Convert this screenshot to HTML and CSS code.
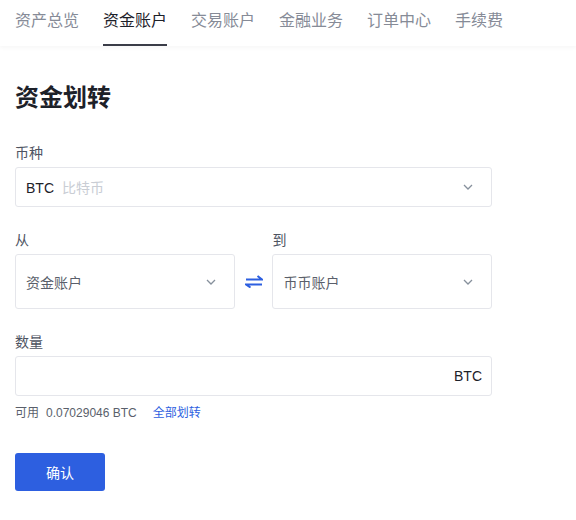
FILE: index.html
```html
<!DOCTYPE html>
<html lang="zh-CN">
<head>
    <meta charset="UTF-8">
    <meta name="viewport" content="width=device-width, initial-scale=1.0">
    <title>资金划转</title>
    <link rel="stylesheet" href="styles.css">
</head>
<body>
    <nav class="tabs">
        <a class="tab">资产总览</a>
        <a class="tab active">资金账户</a>
        <a class="tab">交易账户</a>
        <a class="tab">金融业务</a>
        <a class="tab">订单中心</a>
        <a class="tab">手续费</a>
    </nav>

    <main class="page">
        <h1>资金划转</h1>

        <div class="field">
            <div class="label">币种</div>
            <div class="select">
                <span class="value">BTC <span class="hint">比特币</span></span>
                <svg class="chevron" width="10" height="6" viewBox="0 0 10 6"><path d="M1 1l4 4 4-4" fill="none" stroke="#86909c" stroke-width="1.3"/></svg>
            </div>
        </div>

        <div class="field row">
            <div class="col">
                <div class="label">从</div>
                <div class="select tall">
                    <span class="value muted">资金账户</span>
                    <svg class="chevron" width="10" height="6" viewBox="0 0 10 6"><path d="M1 1l4 4 4-4" fill="none" stroke="#86909c" stroke-width="1.3"/></svg>
                </div>
            </div>
            <div class="swap">
                <svg width="18" height="13" viewBox="0 0 18 13"><path d="M1 4.5h16l-4.5-3.5M17 9.5H1l4.5 3" fill="none" stroke="#2d5fe0" stroke-width="2"/></svg>
            </div>
            <div class="col">
                <div class="label">到</div>
                <div class="select tall">
                    <span class="value muted">币币账户</span>
                    <svg class="chevron" width="10" height="6" viewBox="0 0 10 6"><path d="M1 1l4 4 4-4" fill="none" stroke="#86909c" stroke-width="1.3"/></svg>
                </div>
            </div>
        </div>

        <div class="field last">
            <div class="label">数量</div>
            <div class="select amount">
                <input type="text">
                <span class="unit">BTC</span>
            </div>
            <div class="available">
                可用<span class="num">0.07029046 BTC</span><a class="all">全部划转</a>
            </div>
        </div>

        <button class="confirm">确认</button>
    </main>
</body>
</html>
```

FILE: styles.css
```css
body {
    margin: 0;
    font-family: "Liberation Sans", "Noto Sans CJK SC", sans-serif;
    color: #1d2129;
    background: #fff;
}
.tabs {
    display: flex;
    gap: 24px;
    height: 46px;
    padding: 0 15px;
    box-shadow: 0 2px 4px rgba(0, 0, 0, 0.035);
}
.tab {
    font-size: 16px;
    line-height: 42px;
    color: #868b97;
    border-bottom: 2px solid transparent;
    cursor: pointer;
}
.tab.active {
    color: #1d2129;
    border-bottom-color: #3a3d48;
}
.page {
    padding: 36px 15px 0;
    width: 477px;
}
h1 {
    margin: 0 0 29px;
    font-size: 24px;
    line-height: 32px;
    font-weight: bold;
}
.field {
    margin-bottom: 23px;
}
.field.last {
    margin-bottom: 31px;
}
.label {
    font-size: 14px;
    line-height: 20px;
    color: #4e5462;
    margin-bottom: 4px;
}
.select {
    display: flex;
    align-items: center;
    justify-content: space-between;
    box-sizing: border-box;
    height: 40px;
    padding: 0 18px 0 10px;
    border: 1px solid #e5e6eb;
    border-radius: 3px;
    font-size: 14px;
}
.select.tall {
    height: 55px;
}
.value {
    color: #1d2129;
}
.value.muted {
    color: #5a5f6b;
}
.hint {
    color: #c9cdd4;
    margin-left: 4px;
}
.row {
    display: flex;
    align-items: flex-end;
}
.col {
    width: 220px;
}
.swap {
    width: 38px;
    height: 55px;
    display: flex;
    align-items: center;
    justify-content: center;
}
.amount {
    padding-right: 9px;
}
.amount input {
    flex: 1;
    border: none;
    outline: none;
    font: inherit;
    background: none;
}
.unit {
    color: #1d2129;
}
.available {
    margin-top: 8px;
    font-size: 12px;
    line-height: 18px;
    color: #5a5f6b;
}
.num {
    margin: 0 16px 0 7px;
}
.all {
    color: #2d5fe0;
    cursor: pointer;
}
.confirm {
    width: 90px;
    height: 38px;
    border: none;
    border-radius: 3px;
    background: #2d5fe0;
    color: #fff;
    font-family: inherit;
    font-size: 14px;
    cursor: pointer;
}
```
